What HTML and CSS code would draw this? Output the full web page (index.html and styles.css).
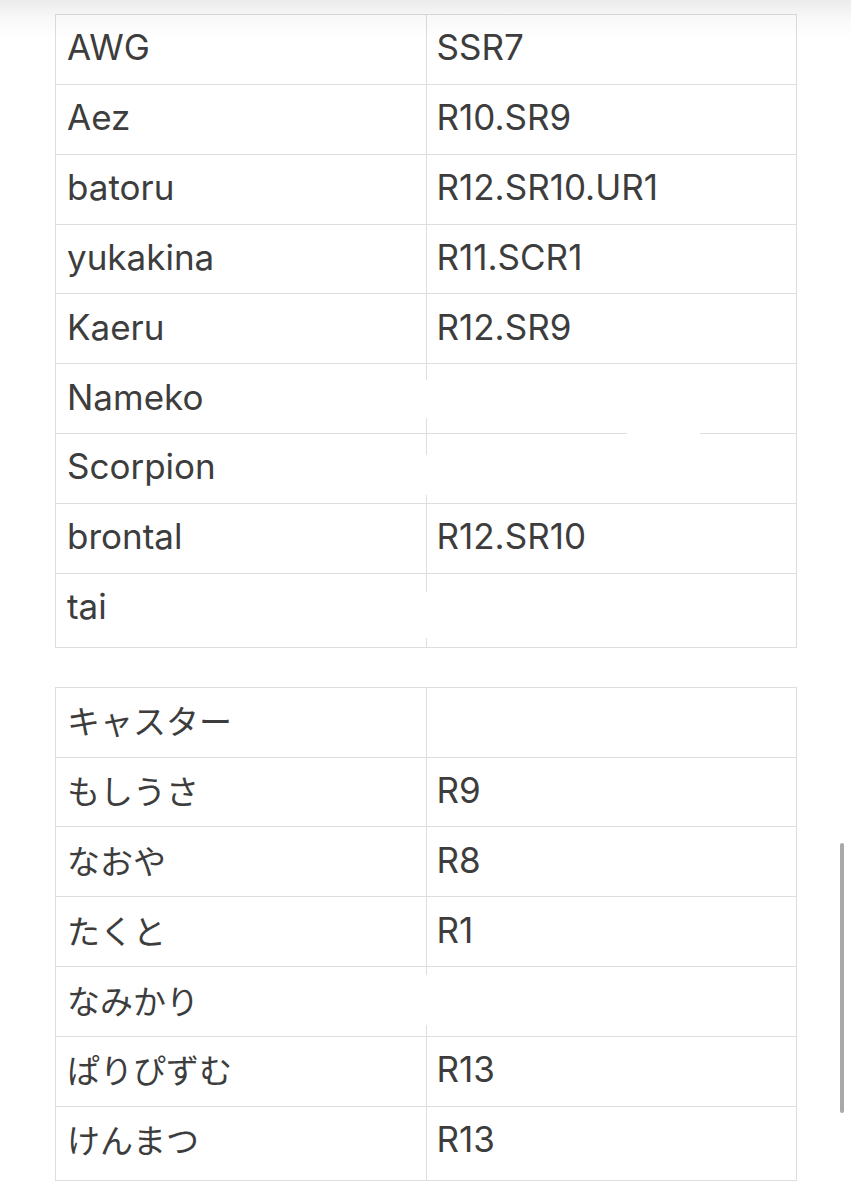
FILE: index.html
```html
<!DOCTYPE html>
<html lang="ja">
<head>
<meta charset="utf-8">
<title>Table</title>
<link rel="stylesheet" href="styles.css">
</head>
<body>
<div class="page">
  <table class="grid">
    <tr><td>AWG</td><td>SSR7</td></tr>
    <tr><td>Aez</td><td>R10.SR9</td></tr>
    <tr><td>batoru</td><td>R12.SR10.UR1</td></tr>
    <tr><td>yukakina</td><td>R11.SCR1</td></tr>
    <tr><td>Kaeru</td><td>R12.SR9</td></tr>
    <tr><td>Nameko</td><td></td></tr>
    <tr><td>Scorpion</td><td></td></tr>
    <tr><td>brontal</td><td>R12.SR10</td></tr>
    <tr class="last"><td>tai</td><td></td></tr>
  </table>

  <table class="grid">
    <tr><td class="jp">キャスター</td><td></td></tr>
    <tr><td class="jp">もしうさ</td><td>R9</td></tr>
    <tr><td class="jp">なおや</td><td>R8</td></tr>
    <tr><td class="jp">たくと</td><td>R1</td></tr>
    <tr><td class="jp">なみかり</td><td></td></tr>
    <tr><td class="jp">ぱりぴずむ</td><td>R13</td></tr>
    <tr class="last"><td class="jp">けんまつ</td><td>R13</td></tr>
  </table>

  <span class="patch p1"></span>
  <span class="patch p2"></span>
  <span class="patch p3"></span>
  <span class="patch p4"></span>
  <span class="patch p5"></span>
</div>
<div class="shade"></div>
<div class="scrollbar"></div>
</body>
</html>
```

FILE: styles.css
```css
html, body {
  margin: 0;
  padding: 0;
  background: #ffffff;
}

body {
  font-family: "Inter", "Noto Sans CJK JP", sans-serif;
  color: #3d3d3d;
  overflow: hidden;
}

.page {
  position: relative;
  width: 851px;
  height: 1200px;
  padding: 14px 0 0 55px;
  box-sizing: border-box;
  display: flex;
  flex-direction: column;
  gap: 39px;
}

.grid {
  width: 742px;
  border-collapse: collapse;
  table-layout: fixed;
}

.grid td {
  width: 50%;
  height: 69.85px;
  border: 1px solid #dedede;
  padding: 0 10px 4px 11px;
  box-sizing: border-box;
  font-size: 35px;
  line-height: 40px;
  vertical-align: middle;
  white-space: nowrap;
}

.grid td + td {
  padding-left: 10px;
}

.grid tr.last td {
  height: 74px;
  padding-bottom: 8px;
}

.grid td.jp {
  font-size: 33px;
  font-family: "Noto Sans CJK JP", sans-serif;
}

.patch {
  position: absolute;
  background: #ffffff;
}

.p1 { left: 423px; top: 380px; width: 6px; height: 38px; }
.p2 { left: 423px; top: 455px; width: 6px; height: 40px; }
.p3 { left: 627px; top: 430px; width: 73px; height: 6px; }
.p4 { left: 423px; top: 592px; width: 6px; height: 46px; }
.p5 { left: 423px; top: 975px; width: 6px; height: 50px; }

.shade {
  position: absolute;
  left: 0;
  top: 0;
  width: 851px;
  height: 40px;
  background: linear-gradient(to bottom, rgba(0, 0, 0, 0.08), rgba(0, 0, 0, 0.025) 50%, rgba(0, 0, 0, 0));
  pointer-events: none;
}

.scrollbar {
  position: absolute;
  left: 840px;
  top: 843px;
  width: 4px;
  height: 270px;
  border-radius: 2px;
  background: #a9a9a9;
}
```
